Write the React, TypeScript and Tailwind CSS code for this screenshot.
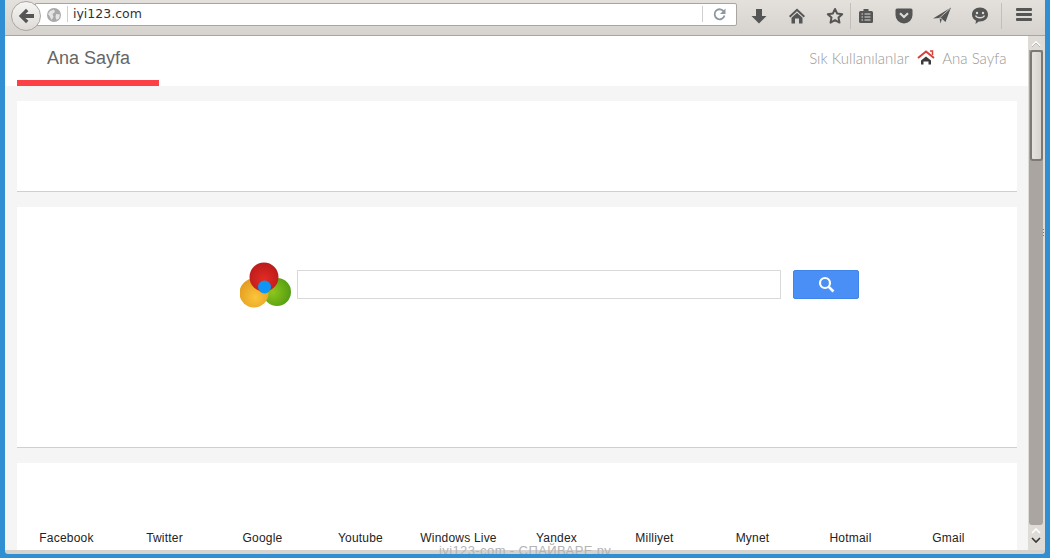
const links = ["Facebook","Twitter","Google","Youtube","Windows Live","Yandex","Milliyet","Mynet","Hotmail","Gmail"];

function Logo() {
  return (
    <svg width="52" height="48" viewBox="0 0 52 48" className="shrink-0">
      <defs>
        <radialGradient id="lr" cx="50%" cy="60%" r="60%"><stop offset="0%" stopColor="#e62a22" /><stop offset="100%" stopColor="#b81c1c" /></radialGradient>
        <radialGradient id="lo" cx="55%" cy="65%" r="60%"><stop offset="0%" stopColor="#fcc53a" /><stop offset="100%" stopColor="#e49f22" /></radialGradient>
        <radialGradient id="lg" cx="35%" cy="50%" r="70%"><stop offset="0%" stopColor="#8fc61c" /><stop offset="100%" stopColor="#4f9a12" /></radialGradient>
      </defs>
      <circle cx="37" cy="30" r="14" fill="url(#lg)" />
      <circle cx="14" cy="31" r="14.5" fill="url(#lo)" />
      <circle cx="24" cy="15" r="14.5" fill="url(#lr)" />
      <circle cx="24.5" cy="25" r="6.5" fill="#0f95f5" />
    </svg>
  );
}

function Sep() {
  return <div className="w-px h-[26px] bg-[#c2bfba] shrink-0" />;
}

export default function App() {
  return (
    <div className="w-[1050px] h-[558px] overflow-hidden bg-[#2f8fd2] font-['Liberation_Sans',sans-serif]">
      <div className="relative mx-[5px] h-[554px] flex flex-col overflow-hidden rounded-b-[3px]">
        {/* browser toolbar */}
        <div className="h-[36px] shrink-0 flex items-center pl-[6px] bg-gradient-to-b from-[#e4e1dd] to-[#d6d3cf] border-b border-[#a9a6a1]">
          <div className="relative z-10 w-[30px] h-[30px] shrink-0 rounded-full border border-[#a9a6a1] bg-gradient-to-b from-[#f6f5f3] to-[#dedbd7] flex items-center justify-center mt-[-4px]">
            <svg width="17" height="16" viewBox="0 0 17 16">
              <path d="M8 0.8 L0.8 8 L8 15.2 L10.4 12.8 L7.4 10 H16 V6 H7.4 L10.4 3.2 Z" fill="#555" />
            </svg>
          </div>
          <div className="ml-[-6px] mt-[-7px] w-[702px] h-[23px] shrink-0 flex items-center bg-white border border-[#a9a6a1] rounded-r-[2px]">
            <svg width="14" height="14" viewBox="0 0 14 14" className="ml-[11px] mt-px shrink-0">
              <circle cx="7" cy="7" r="7" fill="#a9a9a9" />
              <path d="M3 3 L7 1.5 L8 4 L5.5 6 L6.5 9 L4.5 12 L2.5 8 L1 6 Z M9 6 L13 6.5 L12 10.5 L9.5 12 L8.5 9 Z" fill="#e4e4e4" />
            </svg>
            <div className="ml-[6px] w-px h-[16px] bg-[#cfcfcf] shrink-0" />
            <span className="ml-[5px] mt-px text-[12.5px] leading-none text-[#333] font-['DejaVu_Sans',sans-serif]">iyi123.com</span>
            <div className="ml-auto w-px h-[16px] bg-[#cfcfcf] shrink-0" />
            <div className="w-[33px] flex justify-center shrink-0">
              <svg width="13" height="13" viewBox="0 0 13 13">
                <path d="M11 3.8 A5 5 0 1 0 11.5 7.5" fill="none" stroke="#8b98a3" strokeWidth="1.8" />
                <path d="M12.5 0.5 V6 H7 Z" fill="#8b98a3" />
              </svg>
            </div>
          </div>
          <div className="ml-[3px] mt-[-3px] w-[38px] flex justify-center shrink-0">
            <svg width="20" height="20" viewBox="0 0 20 20"><path d="M7 3h6v7h4.5L10 17.5 2.5 10H7z" fill="#555" /></svg>
          </div>
          <div className="mt-[-3px] w-[38px] flex justify-center shrink-0">
            <svg width="20" height="20" viewBox="0 0 20 20">
              <path d="M10 2.5 L2 10 L3.3 11.4 L10 5.2 L16.7 11.4 L18 10 Z M4.5 11.7 L10 6.7 L15.5 11.7 V17.5 H12 V12.5 H8 V17.5 H4.5 Z" fill="#555" />
            </svg>
          </div>
          <div className="ml-[4px] mt-[-3px] w-[30px] flex justify-center shrink-0">
            <svg width="20" height="20" viewBox="0 0 20 20">
              <path d="M10 3 L12.2 7.6 L17.2 8.2 L13.5 11.6 L14.5 16.6 L10 14.1 L5.5 16.6 L6.5 11.6 L2.8 8.2 L7.8 7.6 Z" fill="none" stroke="#555" strokeWidth="2" strokeLinejoin="round" />
            </svg>
          </div>
          <div className="mt-[-3px]"><Sep /></div>
          <div className="mt-[-3px] w-[30px] flex justify-center shrink-0">
            <svg width="16" height="16" viewBox="0 0 16 16">
              <path d="M2.5 3 H5.5 V1 H10.5 V3 H13.5 A1.5 1.5 0 0 1 15 4.5 V13.5 A1.5 1.5 0 0 1 13.5 15 H2.5 A1.5 1.5 0 0 1 1 13.5 V4.5 A1.5 1.5 0 0 1 2.5 3 Z" fill="#555" />
              <path d="M3.5 6 H5 M6.5 6 H12.5 M3.5 9 H5 M6.5 9 H12.5 M3.5 12 H5 M6.5 12 H12.5" stroke="#dedbd7" strokeWidth="1.2" />
            </svg>
          </div>
          <div className="ml-[4px] mt-[-3px] w-[38px] flex justify-center shrink-0">
            <svg width="18" height="16" viewBox="0 0 18 16">
              <path d="M2 0.5 H16 A1.5 1.5 0 0 1 17.5 2 V7 A8.5 8.5 0 0 1 0.5 7 V2 A1.5 1.5 0 0 1 2 0.5 Z" fill="#555" />
              <path d="M5 5.2 L9 9 L13 5.2" fill="none" stroke="#dedbd7" strokeWidth="2.2" />
            </svg>
          </div>
          <div className="mt-[-3px] w-[38px] flex justify-center shrink-0">
            <svg width="20" height="18" viewBox="0 0 20 18">
              <path d="M19 0.5 L13.5 15 L10 12 L8.5 16.5 L7.5 11 L1 11.5 Z" fill="#555" />
              <path d="M18 1.5 L7.5 11 L10 12" fill="none" stroke="#dedbd7" strokeWidth="0.8" />
            </svg>
          </div>
          <div className="mt-[-3px] w-[38px] flex justify-center shrink-0">
            <svg width="18" height="18" viewBox="0 0 18 18">
              <path d="M9 0.5 C13.7 0.5 17 3.5 17 7.5 C17 11.5 13.7 14.5 9 14.5 C8.6 14.5 8.2 14.5 7.8 14.4 L4.5 17 L5 13.7 C2.6 12.5 1 10.2 1 7.5 C1 3.5 4.3 0.5 9 0.5 Z" fill="#555" />
              <circle cx="6" cy="6" r="1.2" fill="#dedbd7" />
              <circle cx="12" cy="6" r="1.2" fill="#dedbd7" />
              <path d="M4.5 8.5 C6 11.5 12 11.5 13.5 8.5" fill="none" stroke="#dedbd7" strokeWidth="1.3" />
            </svg>
          </div>
          <div className="ml-[2px] mt-[-3px]"><Sep /></div>
          <div className="mt-[-6px] w-[43px] flex justify-center shrink-0">
            <div className="w-[16px] flex flex-col gap-[2px]">
              <div className="h-[3px] rounded-[1px] bg-[#555]" />
              <div className="h-[3px] rounded-[1px] bg-[#555]" />
              <div className="h-[3px] rounded-[1px] bg-[#555]" />
            </div>
          </div>
        </div>

        {/* viewport */}
        <div className="flex-1 min-h-0 flex">
          <div className="w-[1023px] shrink-0 overflow-hidden bg-[#f5f5f5]">
            <div className="h-[50px] bg-white flex pl-[12px] pr-[21px]">
              <div className="w-[142px] h-[50px] border-b-[6px] border-[#fb4146] pl-[30px] pt-[10px] text-[18px] leading-[24px] text-[#666]">Ana Sayfa</div>
              <div className="ml-auto flex items-center h-[44px] text-[15px] text-[#999] font-['Lato',sans-serif] font-light">
                <span>Sık Kullanılanlar</span>
                <svg width="18" height="16" viewBox="0 0 18 16" className="ml-[8px] mr-[7px]">
                  <path d="M1 8 L9 1.5 L17 8" fill="none" stroke="#d9403a" strokeWidth="2" />
                  <path d="M13 1 H15.5 V5" fill="none" stroke="#d9403a" strokeWidth="1.5" />
                  <path d="M4 14.5 V10.5 L9 6.5 L14 10.5 V14.5 H11.5 V11.5 H6.5 V14.5 Z" fill="#3b3b3b" />
                </svg>
                <span className="mr-[0.5px]">Ana Sayfa</span>
              </div>
            </div>

            <div className="mx-[12px] w-[1000px] mt-[15px] h-[91px] bg-white border-b border-[#cfcfcf]" />

            <div className="mx-[12px] w-[1000px] mt-[15px] h-[241px] bg-white border-b border-[#cfcfcf] flex items-start pl-[223px] pt-[55px]">
              <Logo />
              <input className="ml-[5px] mt-[8px] w-[484px] h-[29px] border border-[#d9d9d9] bg-white outline-none" />
              <button className="ml-[12px] mt-[8px] w-[66px] h-[29px] rounded-[2px] bg-[#4a8ff5] border border-[#3f84e8] flex items-center justify-center">
                <svg width="17" height="17" viewBox="0 0 17 17">
                  <circle cx="7" cy="7" r="5" fill="none" stroke="#fff" strokeWidth="2.2" />
                  <path d="M10.8 10.8 L15.5 15.5" stroke="#fff" strokeWidth="2.6" />
                </svg>
              </button>
            </div>

            <div className="mx-[12px] w-[1000px] mt-[15px] h-[120px] bg-white pt-[67px] pl-[0.5px]">
              <div className="grid grid-cols-[repeat(10,98px)] text-[12px] leading-[16px] tracking-[0.2px] text-[#222] text-center">
                {links.map((l) => <span key={l}>{l}</span>)}
              </div>
            </div>
          </div>

          {/* scrollbar */}
          <div className="relative w-[17px] shrink-0 bg-[#dfdcd8] flex flex-col items-start pl-px">
            <div className="h-[14px] w-[14px] flex items-center justify-center">
              <svg width="10" height="6" viewBox="0 0 10 6" className="mt-[2px]"><path d="M1 5 L5 1 L9 5" fill="none" stroke="#fff" strokeWidth="1.6" /><path d="M1 6 L5 2 L9 6" fill="none" stroke="#aaa" strokeWidth="0.8" /></svg>
            </div>
            <div className="w-[14px] h-[475px] rounded-b-[3px] bg-[#aaa5a0] flex flex-col items-center">
              <div className="w-[13px] h-[111px] rounded-[3px] border-2 border-[#7c7975] bg-gradient-to-r from-[#e6e3df] to-[#d6d3cf]" />
            </div>
            <div className="w-[14px] flex flex-col items-center mt-[3px] gap-[3px]">
              <svg width="10" height="6" viewBox="0 0 10 6"><path d="M1 5 L5 1 L9 5" fill="none" stroke="#fff" strokeWidth="1.6" /></svg>
              <svg width="10" height="6" viewBox="0 0 10 6"><path d="M1 1 L5 5 L9 1" fill="none" stroke="#333" strokeWidth="1.6" /></svg>
            </div>
            <div className="absolute right-[1px] top-[193px] flex flex-col gap-[2px]">
              <div className="w-px h-px bg-[#777]" />
              <div className="w-px h-px bg-[#777]" />
              <div className="w-px h-px bg-[#777]" />
            </div>
          </div>
        </div>

        {/* window bottom edge */}
        <div className="h-[4px] shrink-0 bg-[#d6d3cf]" />

        {/* watermark */}
        <div className="absolute left-[434px] top-[543px] text-[13px] leading-[15px] tracking-[0.4px] text-[#b3b3b3] whitespace-nowrap">iyi123-com - СПАЙВАРЕ.ру</div>
      </div>
    </div>
  );
}
